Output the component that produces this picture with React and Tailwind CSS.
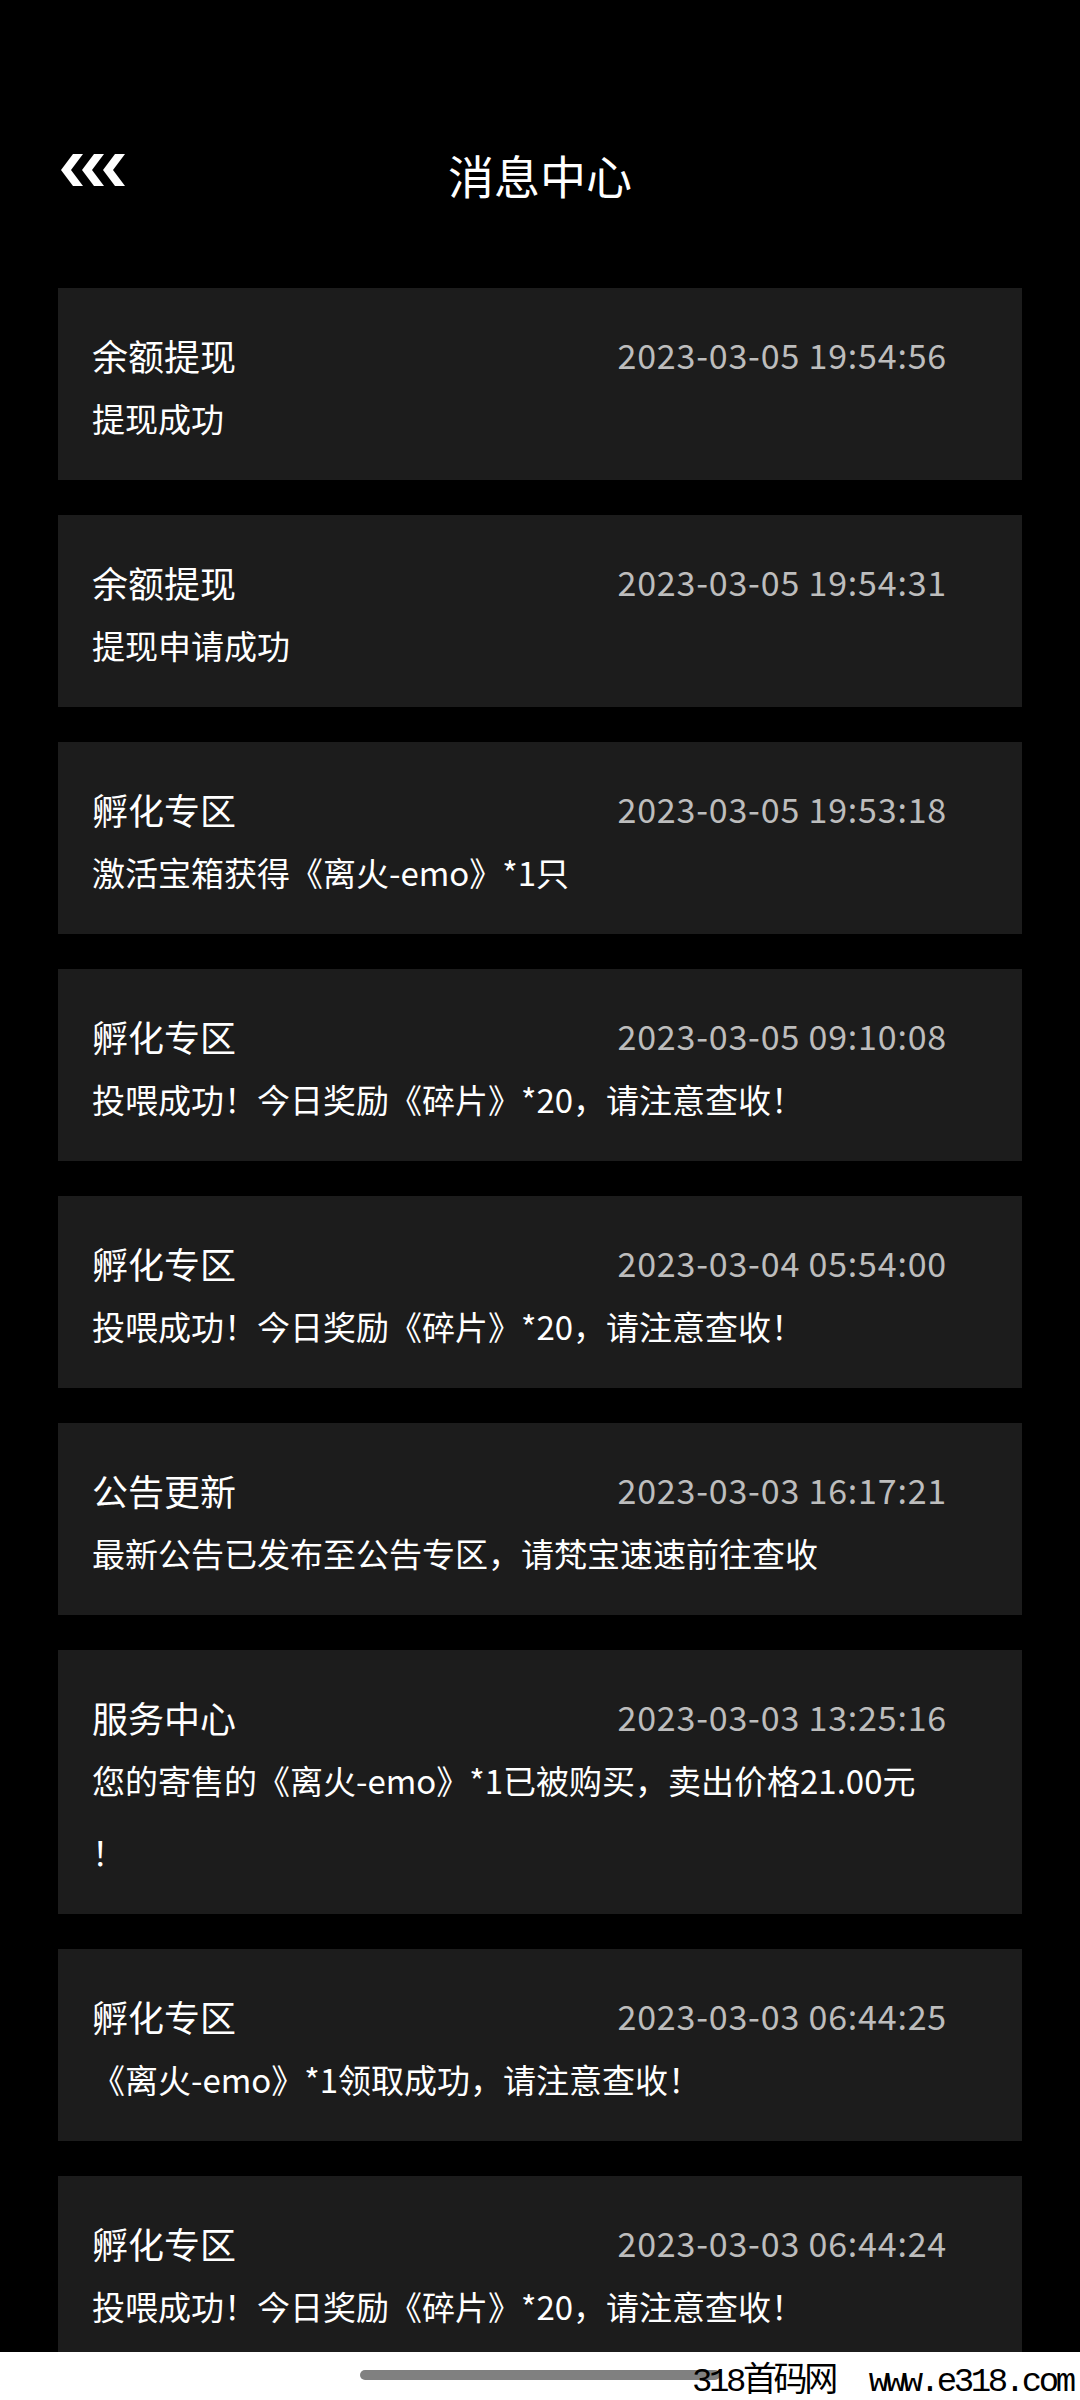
import React from "react";

const messages = [
  { title: "余额提现", time: "2023-03-05 19:54:56", body: "提现成功" },
  { title: "余额提现", time: "2023-03-05 19:54:31", body: "提现申请成功" },
  { title: "孵化专区", time: "2023-03-05 19:53:18", body: "激活宝箱获得《离火-emo》*1只" },
  { title: "孵化专区", time: "2023-03-05 09:10:08", body: "投喂成功！今日奖励《碎片》*20，请注意查收！" },
  { title: "孵化专区", time: "2023-03-04 05:54:00", body: "投喂成功！今日奖励《碎片》*20，请注意查收！" },
  { title: "公告更新", time: "2023-03-03 16:17:21", body: "最新公告已发布至公告专区，请梵宝速速前往查收" },
  {
    title: "服务中心",
    time: "2023-03-03 13:25:16",
    body: (
      <>
        您的寄售的《离火-emo》*1已被购买，卖出价格21.00元
        <br />！
      </>
    ),
  },
  { title: "孵化专区", time: "2023-03-03 06:44:25", body: "《离火-emo》*1领取成功，请注意查收！" },
  { title: "孵化专区", time: "2023-03-03 06:44:24", body: "投喂成功！今日奖励《碎片》*20，请注意查收！" },
];

const BackIcon = () => (
  <svg width="66" height="32" viewBox="0 0 66 32" fill="white">
    {[0, 21, 42].map((x) => (
      <polygon
        key={x}
        points={`${x + 12},0 ${x + 22},0 ${x + 10},16 ${x + 22},32 ${x + 12},32 ${x},16`}
      />
    ))}
  </svg>
);

const App = () => {
  return (
    <div
      className="w-[1080px] h-[2400px] bg-black flex flex-col overflow-hidden"
      style={{ fontFamily: '"Noto Sans CJK SC", "Noto Sans", sans-serif' }}
    >
      {/* Page content */}
      <div className="h-[2352px] overflow-hidden">
        {/* Header */}
        <div className="grid grid-cols-[1fr_auto_1fr] items-center h-[64px] mt-[142px] px-[61px]">
          <div className="-mt-[8px]">
            <BackIcon />
          </div>
          <h1 className="text-white text-[46px] leading-[64px]">消息中心</h1>
          <div />
        </div>

        {/* Message list */}
        <div className="mt-[82px] mx-[58px] flex flex-col gap-[35px]">
          {messages.map((m, i) => (
            <div key={i} className="bg-[#1c1c1c] pt-[40px] pb-[26px] pl-[34px] pr-[75px]">
              <div className="flex items-center justify-between h-[54px]">
                <span className="text-white text-[36px] leading-[54px]">{m.title}</span>
                <span className="text-[#bdbdbd] text-[34px] tracking-[0.8px] leading-[54px]">
                  {m.time}
                </span>
              </div>
              <p className="text-white text-[33px] leading-[72px]">{m.body}</p>
            </div>
          ))}
        </div>
      </div>

      {/* Bottom bar */}
      <div className="relative h-[48px] bg-white">
        <div className="absolute left-[360px] top-[18px] w-[360px] h-[10px] rounded-full bg-[#808080]" />
        <div
          className="absolute left-[692px] top-[10px] text-black text-[34px] leading-[40px] tracking-[-3.4px] whitespace-pre"
          style={{ fontFamily: '"Liberation Mono", "Noto Sans CJK SC", monospace' }}
        >
          318首码网  www.e318.com
        </div>
      </div>
    </div>
  );
};

export default App;
